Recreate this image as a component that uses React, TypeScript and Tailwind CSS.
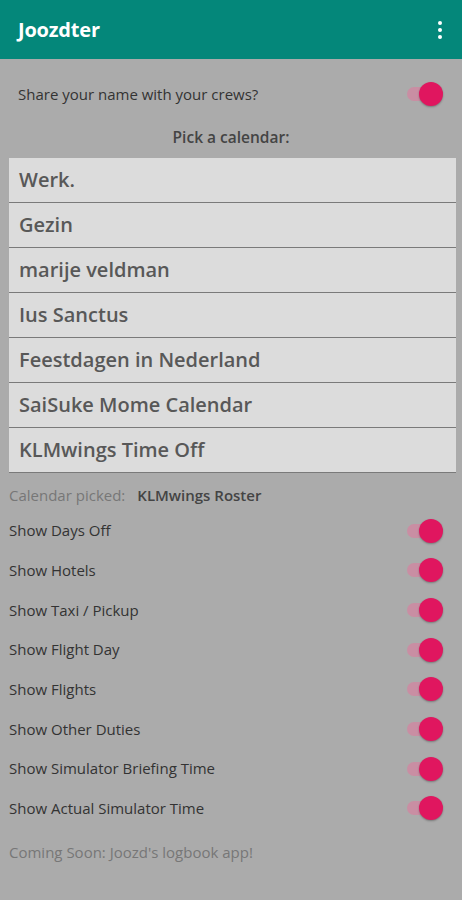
import React from 'react';

const calendars = [
    'Werk.',
    'Gezin',
    'marije veldman',
    'Ius Sanctus',
    'Feestdagen in Nederland',
    'SaiSuke Mome Calendar',
    'KLMwings Time Off',
];

const options = [
    'Show Days Off',
    'Show Hotels',
    'Show Taxi / Pickup',
    'Show Flight Day',
    'Show Flights',
    'Show Other Duties',
    'Show Simulator Briefing Time',
    'Show Actual Simulator Time',
];

// Android style switch, always on in this screen
const Toggle: React.FC = () => (
    <div className="relative w-[36px] h-[24px] flex items-center">
        <div className="w-[32px] h-[14px] rounded-full bg-[#c98ea3]" />
        <div className="absolute right-0 top-0 w-[24px] h-[24px] rounded-full bg-[#e0165f] shadow-[0_1px_2px_rgba(0,0,0,0.3)]" />
    </div>
);

const App: React.FC = () => {
    return (
        <div className="w-[462px] min-h-[900px] bg-[#ababab] font-['Open_Sans',sans-serif]">
            <header className="h-[59px] bg-[#04877a] flex items-center justify-between pl-[18px] pr-[16px]">
                <h1 className="text-white text-[20px] font-bold tracking-[-0.2px]">Joozdter</h1>
                <div className="flex flex-col gap-[3px] items-center px-[4px]">
                    <span className="w-[4px] h-[4px] rounded-full bg-white" />
                    <span className="w-[4px] h-[4px] rounded-full bg-white" />
                    <span className="w-[4px] h-[4px] rounded-full bg-white" />
                </div>
            </header>

            <div className="flex items-center justify-between pl-[18px] pr-[19px] h-[36px] mt-[17px]">
                <span className="text-[15px] text-[#333]">Share your name with your crews?</span>
                <Toggle />
            </div>

            <p className="text-center text-[15.5px] font-semibold text-[#444] mt-[14px]">Pick a calendar:</p>

            <ul className="ml-[9px] mr-[6px] mt-[9px] flex flex-col gap-[1px] bg-[#7a7a7a] border-b border-[#7a7a7a]">
                {calendars.map((name) => (
                    <li key={name} className="h-[44px] bg-[#dcdcdc] flex items-center pl-[10px] text-[20px] font-semibold text-[#585858]">
                        {name}
                    </li>
                ))}
            </ul>

            <div className="flex items-center pl-[9px] mt-[11px] text-[15px]">
                <span className="text-[#777]">Calendar picked:</span>
                <span className="ml-[12px] font-semibold text-[#444]">KLMwings Roster</span>
            </div>

            <div className="flex flex-col mt-[4px]">
                {options.map((opt) => (
                    <div key={opt} className="h-[39.7px] flex items-center justify-between pl-[9px] pr-[19px]">
                        <span className="text-[15px] text-[#333]">{opt}</span>
                        <Toggle />
                    </div>
                ))}
            </div>

            <p className="pl-[9px] mt-[13px] text-[15px] text-[#777]">Coming Soon: Joozd's logbook app!</p>
        </div>
    );
};

export default App;
